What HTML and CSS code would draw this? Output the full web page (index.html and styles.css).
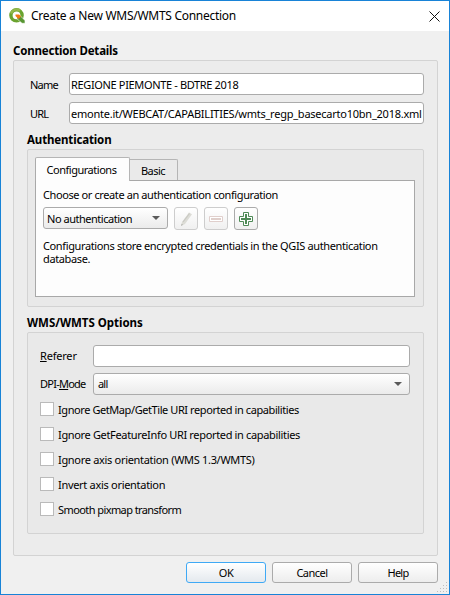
FILE: index.html
```html
<!DOCTYPE html>
<html lang="en">
<head>
<meta charset="utf-8">
<title>Create a New WMS/WMTS Connection</title>
<link rel="stylesheet" href="styles.css">
</head>
<body>
<div class="window">
  <header class="titlebar">
    <svg class="logo" width="17" height="16" viewBox="0 0 17 16">
      <circle cx="7.5" cy="7.3" r="5.6" fill="none" stroke="#6aa32f" stroke-width="3.4"/>
      <path d="M2 5.5A5.8 5.8 0 0 1 11 2.8" fill="none" stroke="#93b84a" stroke-width="2.4"/>
      <path d="M8 8h3.5l4.5 4.5v2.8h-3L8 10.800z" fill="#589632" stroke="#fff" stroke-width=".6"/>
      <path d="M6.500 6.500h3.600l2 2-2.600 2.600-3-3z" fill="#ee7913"/>
    </svg>
    <span class="title">Create a New WMS/WMTS Connection</span>
    <svg class="close" width="11" height="11" viewBox="0 0 11 11"><path d="M.5.5l10 10M10.500.5l-10 10" stroke="#111" fill="none"/></svg>
  </header>

  <main class="content">
    <h2 class="heading t-details">Connection Details</h2>
    <section class="group details">
      <div class="field"><span class="label t-name">Name</span><div class="input"><span class="t-region">REGIONE PIEMONTE - BDTRE 2018</span></div></div>
      <div class="field"><span class="label t-url">URL</span><div class="input url"><span class="t-address">emonte.it/WEBCAT/CAPABILITIES/wmts_regp_basecarto10bn_2018.xml</span></div></div>

      <h2 class="heading t-auth">Authentication</h2>
      <section class="group auth">
        <div class="tabs">
          <div class="tab active"><span class="t-config">Configurations</span></div>
          <div class="tab"><span class="t-basic">Basic</span></div>
        </div>
        <div class="page">
          <p class="line t-choose">Choose or create an authentication configuration</p>
          <div class="tools">
            <div class="combo small"><span class="t-noauth">No authentication</span><i class="arrow"></i></div>
            <div class="tool disabled"><svg width="16" height="16" viewBox="0 0 16 16"><path d="M3 15l1-4 7-9.500 3 1.800-7 9.700z" fill="#dcdcd6"/><path d="M5 11l6.500-8.500" stroke="#c9c9c3" stroke-width="1.200"/><path d="M3 15l.6-2.200 1.500 1z" fill="#b5b5b0"/></svg></div>
            <div class="tool disabled"><svg width="16" height="16" viewBox="0 0 16 16"><path d="M1.500 5.500h13v5h-13z" fill="#fff" stroke="#e0cfcc"/><path d="M3 8h10" stroke="#dfcfcb" stroke-width="2"/></svg></div>
            <div class="tool"><svg width="16" height="16" viewBox="0 0 16 16"><path d="M5.500 1.500h5v4h4v5h-4v4h-5v-4h-4v-5h4z" fill="#fff" stroke="#4f8a57"/><path d="M8 3v10M3 8h10" stroke="#4f8a57" stroke-width="2"/></svg></div>
          </div>
          <p class="note t-store">Configurations store encrypted credentials in the QGIS authentication<br>database.</p>
        </div>
      </section>

      <h2 class="heading t-options">WMS/WMTS Options</h2>
      <section class="group options">
        <div class="field"><span class="label t-referer"><u>R</u>eferer</span><div class="input"></div></div>
        <div class="field"><span class="label t-dpi">DPI-<u>M</u>ode</span><div class="combo mode"><span class="t-all">all</span><i class="arrow"></i></div></div>
        <div class="checks">
          <div class="check"><i class="box"></i><span class="t-c1">Ignore GetMap/GetTile URI reported in capabilities</span></div>
          <div class="check"><i class="box"></i><span class="t-c2">Ignore GetFeatureInfo URI reported in capabilities</span></div>
          <div class="check"><i class="box"></i><span class="t-c3">Ignore axis orientation (WMS 1.3/WMTS)</span></div>
          <div class="check"><i class="box"></i><span class="t-c4">Invert axis orientation</span></div>
          <div class="check"><i class="box"></i><span class="t-c5">Smooth pixmap transform</span></div>
        </div>
      </section>
    </section>
    <footer class="buttons">
      <div class="button primary"><span class="t-ok">OK</span></div>
      <div class="button"><span class="t-cancel">Cancel</span></div>
      <div class="button"><span class="t-help">Help</span></div>
    </footer>
  </main>
  <svg class="grip" width="11" height="11" viewBox="0 0 11 11" fill="#bdbdbd"><path d="M9 0h1v1H9zM6 3h1v1H6zM9 3h1v1H9zM3 6h1v1H3zM6 6h1v1H6zM9 6h1v1H9zM0 9h1v1H0zM3 9h1v1H3zM6 9h1v1H6zM9 9h1v1H9z"/></svg>
</div>
</body>
</html>
```
FILE: styles.css
```css
* { box-sizing: border-box; }
body { margin: 0; font: 11px/14px "Noto Sans", "Open Sans", sans-serif; color: #000; }
.window { position: relative; width: 450px; height: 595px; border: 1px solid #1883d7; background: #f0f0f0; overflow: hidden; white-space: nowrap; }
.titlebar { height: 30px; background: #fff; display: flex; align-items: center; padding: 0 9px 0 8px; }
.title { margin-left: 5px; font-size: 12px; letter-spacing: -.28px; }
.close { margin-left: auto; }
.content { padding: 13px 11px 0 12px; }
.heading { margin: 0; font-size: 11.5px; line-height: 14px; height: 16px; font-weight: 700; }
.group { border: 1px solid #d3d3d3; border-radius: 2px; background: #ececec; }
.details { height: 496px; padding: 12px 13px 0; }
.field { display: flex; height: 22px; }
.label { width: 42px; padding: 5px 0 0 3px; flex: none; }
.details > .field + .field { margin-top: 7px; }
.input { flex: 1; height: 22px; border: 1px solid #ababab; border-radius: 3px; background: #fff; padding: 4px 1px 0; overflow: hidden; }
.details > .heading { margin-top: 9px; }
.auth { height: 158px; padding: 7px; background: #e9e9e9; }
.tabs { display: flex; align-items: flex-end; height: 23px; }
.tab { height: 21px; width: 48px; border: 1px solid #b5b5b5; border-bottom: 0; border-left: 0; background: #eaeaea; padding: 4px 1px 0 0; text-align: center; border-radius: 0 2px 0 0; }
.tab.active { position: relative; width: 95px; height: 24px; margin-bottom: -1px; padding: 5px 2px 0 0; border-left: 1px solid #ababab; background: #fdfdfd; border-radius: 2px 2px 0 0; }
.page { height: 117px; width: 380px; border: 1px solid #a8a8a8; background: #fdfdfd; padding: 7px 7px 0; }
.line { margin: 0; height: 13px; line-height: 13px; }
.note { margin: 0; line-height: 13px; }
.tools { display: flex; gap: 6px; margin: 6px 0 9px; height: 23px; }
.combo { flex: 1; display: flex; height: 22px; align-items: flex-start; justify-content: space-between; border: 1px solid #ababab; border-radius: 3px; background: linear-gradient(#fff, #ebebeb); padding: 4px 7px 0 4px; }
.combo.small { flex: none; width: 125px; padding-left: 3px; }
.combo.mode { padding-top: 3px; }
.combo.mode .arrow { margin-top: 5px; }
.arrow { border: 4px solid transparent; border-top-color: #5a5a5a; border-bottom: 0; margin-top: 4px; }
.tool { width: 24px; height: 23px; border: 1px solid #ababab; border-radius: 3px; background: linear-gradient(#fff, #f0f0f0); padding: 3px; }
.tool svg { display: block; }
.tool.disabled { border-color: #cdcdcd; }
.options { height: 202px; padding: 12px 13px 0 12px; background: #e9e9e9; }
.options .field + .field { margin-top: 6px; }
.options .label { width: 53px; padding: 4px 0 0; }
.checks { margin-top: 7px; }
.check { display: flex; height: 25px; }
.box { width: 14px; height: 14px; border: 1px solid #bababa; background: #fff; margin-right: 4px; }
.check span { padding-top: 1px; }
.buttons { display: flex; justify-content: flex-end; gap: 6px; margin-top: 6px; }
.button { width: 80px; height: 21px; border: 1px solid #ababab; border-radius: 3px; background: linear-gradient(#fff, #ededed); text-align: center; padding-top: 3px; }
.button.primary { border-color: #3fa9f5; background: linear-gradient(#fff, #e4e9ee); }
.grip { position: absolute; right: 1px; bottom: 1px; }
u { text-underline-offset: 1px; }

/* tracking per label */
.t-details { letter-spacing: -.18px; }
.t-auth { letter-spacing: -.15px; }
.t-options { letter-spacing: -.03px; }
.t-name, .t-url, .t-all, .t-help { letter-spacing: -.8px; }
.t-region { letter-spacing: -.35px; }
.t-address { letter-spacing: -.24px; }
.t-config, .t-noauth { letter-spacing: -.48px; }
.t-basic, .t-ok, .t-cancel { letter-spacing: -.5px; }
.t-choose { letter-spacing: -.4px; }
.t-store { letter-spacing: -.37px; }
.t-referer { letter-spacing: -.2px; }
.t-dpi { letter-spacing: -.75px; }
.t-c1 { letter-spacing: -.42px; }
.t-c2 { letter-spacing: -.34px; }
.t-c3 { letter-spacing: -.31px; }
.t-c4 { letter-spacing: -.3px; }
.t-c5 { letter-spacing: -.58px; }
```
